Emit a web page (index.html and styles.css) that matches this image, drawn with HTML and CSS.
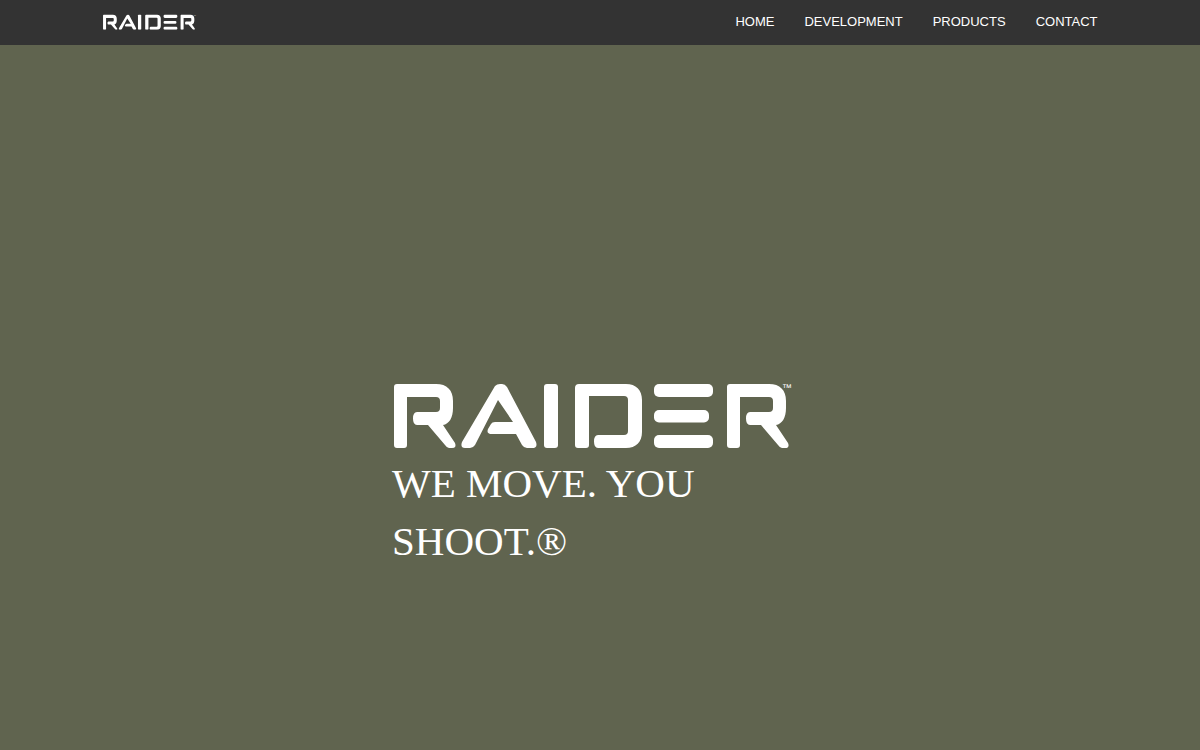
FILE: index.html
```html
<!DOCTYPE html>
<html lang="en">
<head>
<meta charset="utf-8">
<title>Raider</title>
<link rel="stylesheet" href="styles.css">
</head>
<body>
<svg class="defs" width="0" height="0" aria-hidden="true">
  <symbol id="raider-logo" viewBox="394 376 404 72">
    <path id="logo-r" d="M397 384H436C447 384 453 390 453 401V408C453 418 449 424 443 425L455 443Q457 448 452 448H449Q447 448 445 445L428 425H417Q413 425 413 418.500Q413 412 417 412H436Q440 412 440 408V401Q440 397 436 397H407V445Q407 448 404 448H397Q394 448 394 445V387Q394 384 397 384Z"/>
    <path d="M495 386Q497 384 500 384H502Q505 384 507 387L536 442Q538 448 532 448H527Q524 448 522 445L516 434H492Q486 434 488 429L491 424Q492 422 495 422H513L498 400L475 445Q473 448 470 448H465Q460 448 462 442Z"/>
    <rect x="544" y="384" width="14" height="64" rx="3"/>
    <path d="M579 384H626C636 384 642 390 642 400V432C642 442 636 448 626 448H598Q594 448 594 441.500Q594 435 598 435H624Q628 435 628 431V400Q628 396 624 396H589V445Q589 448 586 448H578Q575 448 575 445V388Q575 384 579 384Z"/>
    <rect x="654" y="384" width="59" height="13" rx="5"/>
    <rect x="654" y="410" width="55" height="12.500" rx="5"/>
    <rect x="654" y="435" width="59" height="13" rx="5"/>
    <use href="#logo-r" x="333"/>
  </symbol>
</svg>
<header class="topbar">
  <div class="topbar-inner">
    <a class="brand" href="#" aria-label="Raider">
      <svg class="brand-logo"><use href="#raider-logo"/></svg>
      <span class="tm tm-small">™</span>
    </a>
    <nav class="nav">
      <a href="#">Home</a>
      <a href="#">Development</a>
      <a href="#">Products</a>
      <a href="#">Contact</a>
    </nav>
  </div>
</header>
<main class="hero">
  <div class="hero-content">
    <div class="hero-mark">
      <svg class="hero-logo" role="img" aria-label="Raider"><use href="#raider-logo"/></svg>
      <span class="tm tm-large">™</span>
    </div>
    <h1 class="tagline">WE MOVE. YOU SHOOT.®</h1>
  </div>
</main>
</body>
</html>
```
FILE: styles.css
```css
* { box-sizing: border-box; }
html, body { margin: 0; height: 100%; }
body {
  display: flex;
  flex-direction: column;
  height: 750px;
  overflow: hidden;
  background: #60644f;
  color: #fff;
  font-family: "Liberation Serif", serif;
}
.defs { position: absolute; }
symbol { fill: #fff; }
.tm {
  position: absolute;
  font-family: "Liberation Sans", sans-serif;
  line-height: 1;
  color: #fff;
}
.tm-large { left: 390px; top: 6.500px; font-size: 10px; }
.tm-small { left: 90.400px; top: 0.660px; font-size: 2.330px; }
.topbar { height: 45px; background: #333; flex: none; }
.topbar-inner {
  display: flex;
  justify-content: space-between;
  height: 100%;
  padding: 14px 102.500px 0 103px;
}
.brand { position: relative; display: block; height: 16px; text-decoration: none; }
.brand-logo { display: block; width: 94.170px; height: 16.780px; margin-top: -0.780px; fill: #fff; }
.nav { display: flex; gap: 30px; font: 13px/15px "Liberation Sans", Arial, sans-serif; text-transform: uppercase; }
.nav a { color: #fff; text-decoration: none; }
.hero { flex: 1; padding: 331px 0 0 392px; }
.hero-content { width: 406px; }
.hero-mark { position: relative; }
.hero-logo { display: block; width: 404px; height: 72px; margin-left: 2px; fill: #fff; }
.tagline {
  margin: 6px 0 0;
  font-size: 41px;
  line-height: 58px;
  font-weight: 400;
  width: 330px;
}
```
